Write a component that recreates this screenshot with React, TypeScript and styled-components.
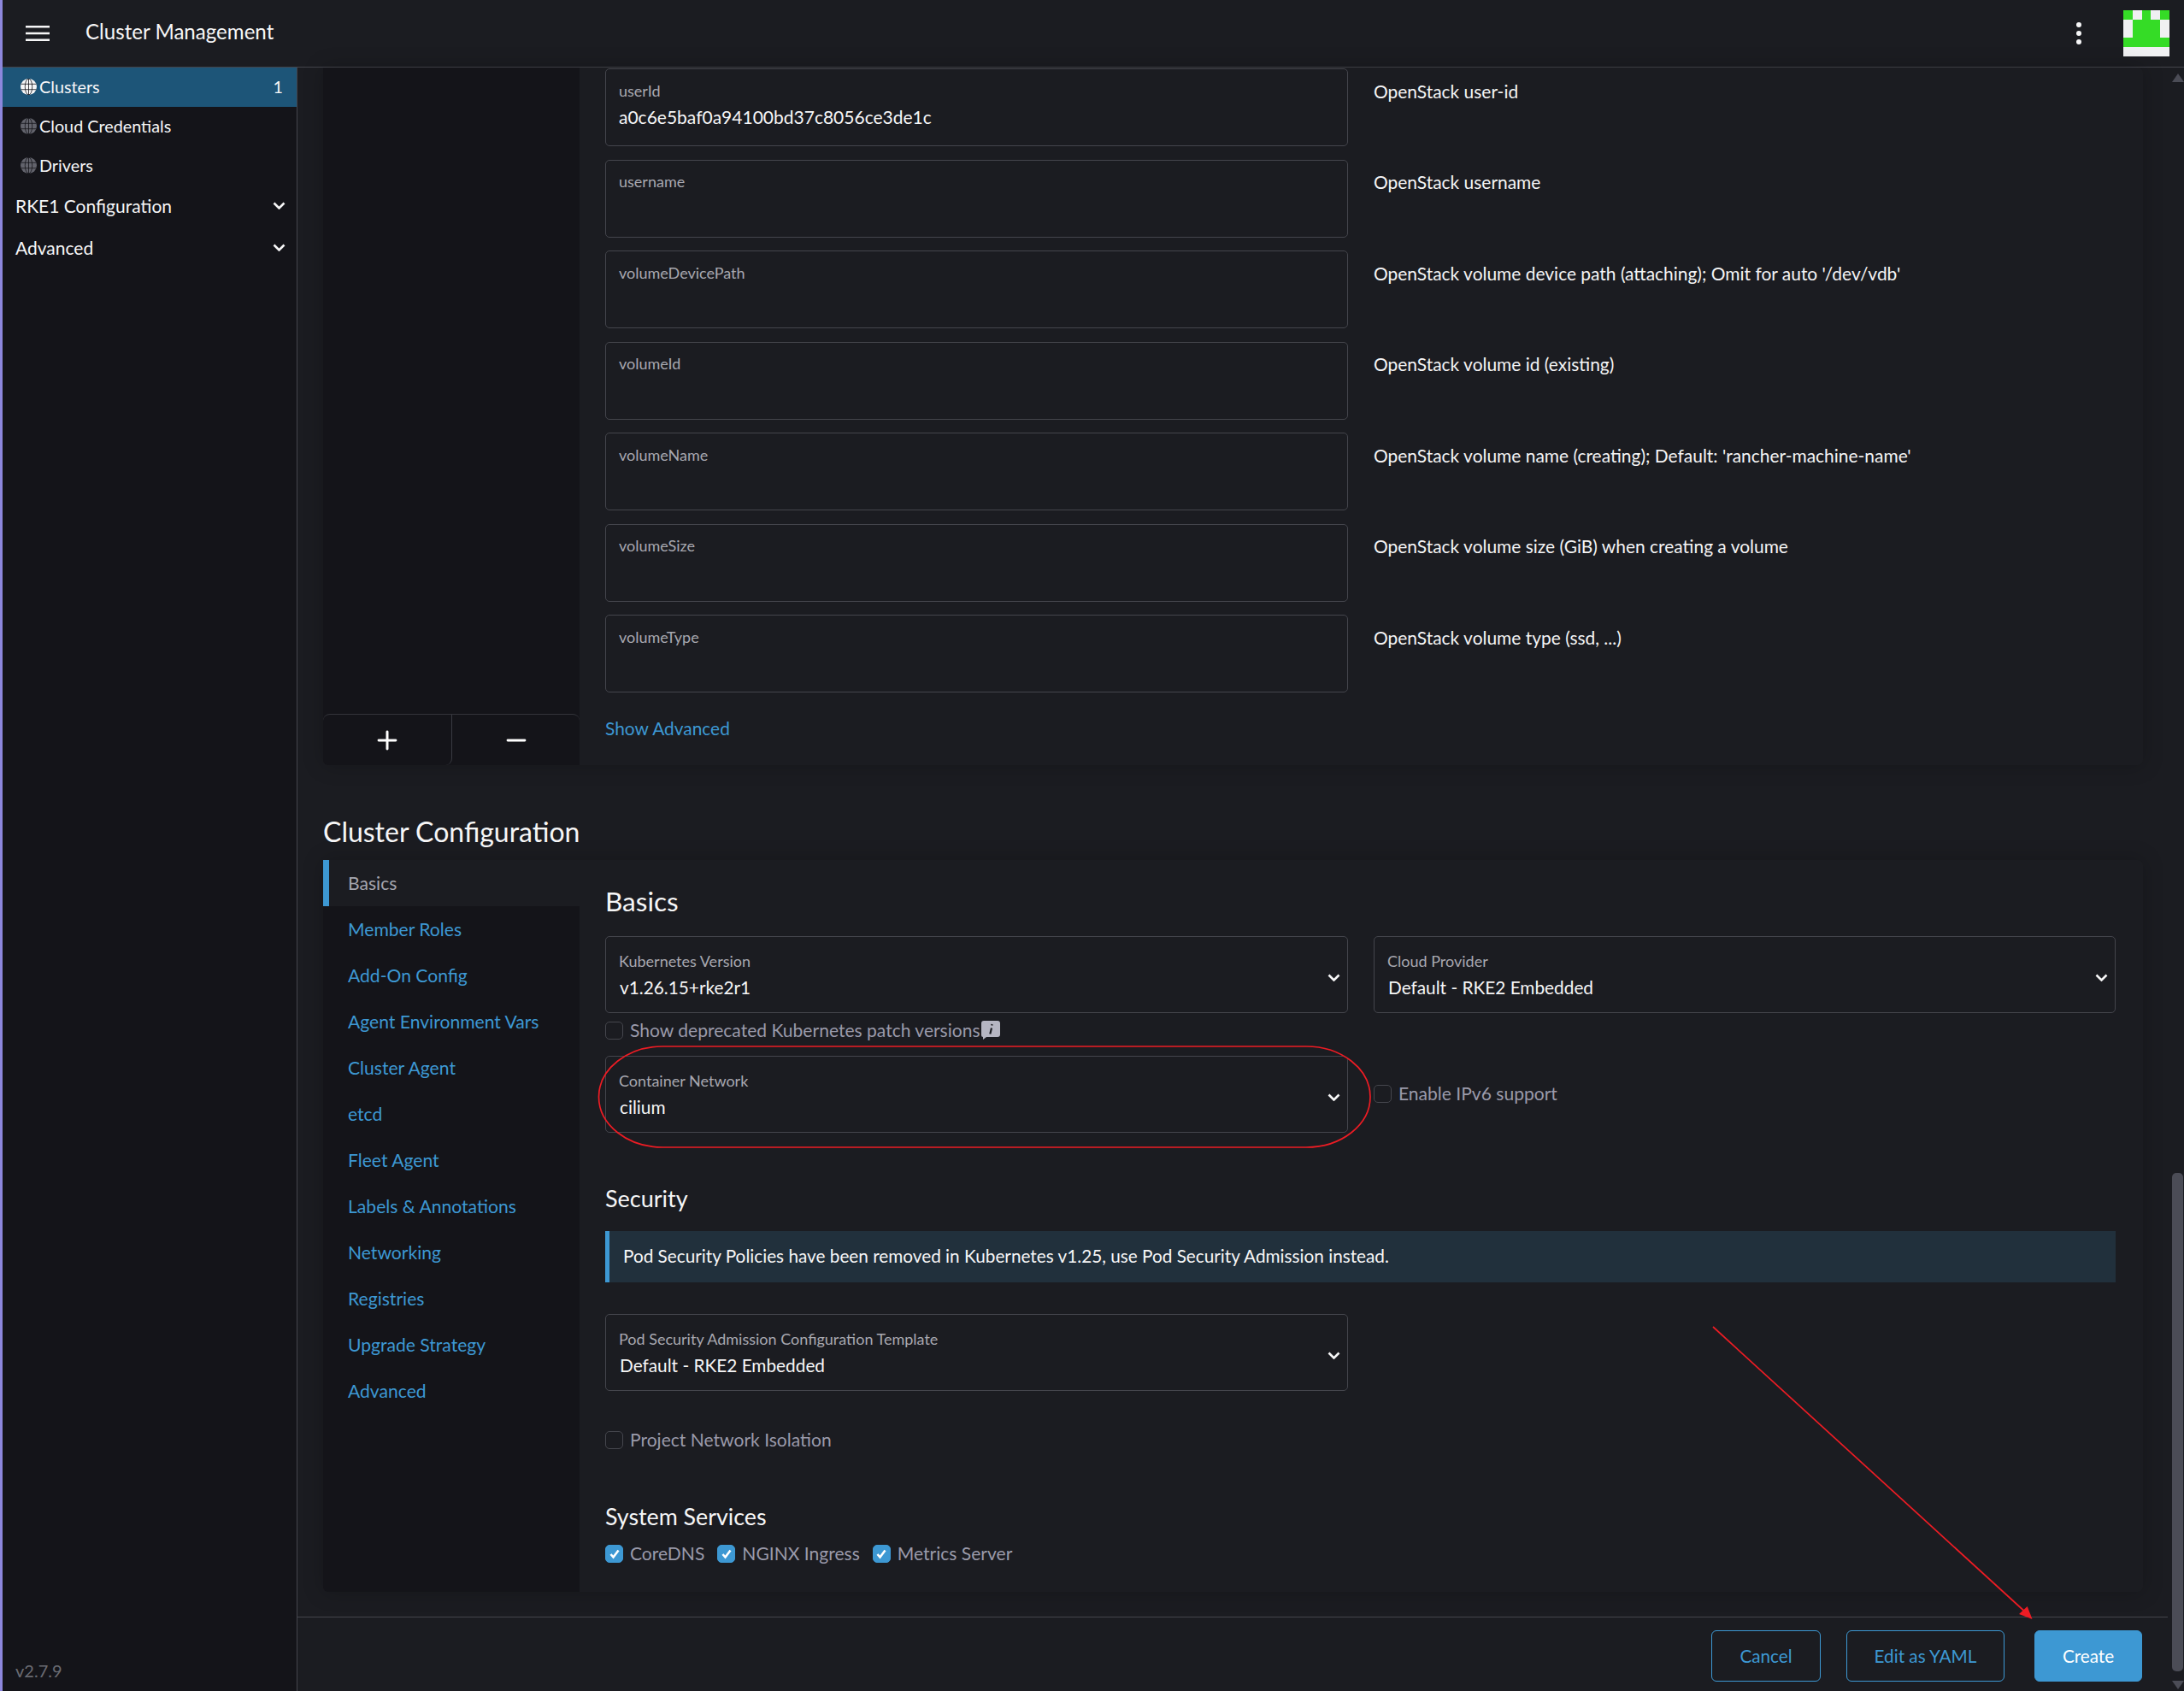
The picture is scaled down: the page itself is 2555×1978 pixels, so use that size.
import React from "react";
import styled, { createGlobalStyle } from "styled-components";
import { Plus, Minus } from "lucide-react";

const GlobalStyle = createGlobalStyle`
  * { box-sizing: border-box; }
  html, body { margin: 0; padding: 0; background: #1b1c21; }
  body { font-family: Lato, "Liberation Sans", sans-serif; font-size: 21px; color: #f4f4f5; overflow: hidden; }
`;

const BLUE = "#3d98d3";
const LINE = "#44454c";
const DARK = "#141419";
const BG = "#1b1c21";

const Page = styled.div`
  position: relative;
  width: 2555px;
  height: 1978px;
  display: flex;
  flex-direction: column;
  border-left: 3px solid #8d87dc;
  overflow: hidden;
`;
const Header = styled.header`
  flex: 0 0 79px;
  display: flex;
  align-items: center;
  padding: 0 17px 1px 27px;
  border-bottom: 1px solid ${LINE};
`;
const Title = styled.div`
  margin: 0 0 3px 42px;
  font-size: 24.1px;
  line-height: 30px;
  color: #f6f6f7;
  flex: 1;
`;
const Kebab = styled.svg`
  width: 8px;
  height: 30px;
  margin-right: 48.5px;
`;
const Avatar = styled.svg`
  width: 54px;
  height: 54px;
  display: block;
`;
const Body = styled.div`
  flex: 1;
  min-height: 0;
  display: flex;
`;
const Sidebar = styled.nav`
  flex: 0 0 345px;
  display: flex;
  flex-direction: column;
  background: ${DARK};
  border-right: 1px solid ${LINE};
`;
const NavItem = styled.div<{ $active?: boolean }>`
  height: 46px;
  display: flex;
  align-items: center;
  padding: 0 16px 2px 21px;
  font-size: 19.8px;
  color: #f6f6f7;
  background: ${(p) => (p.$active ? "#1d5578" : "transparent")};
`;
const GlobeIcon = styled.svg`
  width: 19px;
  height: 19px;
  margin-right: 3px;
  flex: none;
`;
const NavCount = styled.span`
  margin-left: auto;
`;
const NavGroup = styled.div`
  height: 48.5px;
  display: flex;
  align-items: center;
  justify-content: space-between;
  padding: 0 13px 1.5px 15px;
  font-size: 21px;
  color: #f6f6f7;
`;
const Version = styled.div`
  margin-top: auto;
  padding: 0 0 12px 15px;
  font-size: 20px;
  line-height: 24px;
  color: #6b6c73;
`;
const Chevron = styled.svg`
  width: 15px;
  height: 9px;
  flex: none;
`;
const Main = styled.main`
  flex: 1;
  min-width: 0;
  display: flex;
`;
const Column = styled.div`
  flex: 1;
  min-width: 0;
  display: flex;
  flex-direction: column;
`;
const Content = styled.div`
  flex: 1;
  min-height: 0;
  padding: 0 29px 0 30px;
`;
const Panel = styled.section`
  display: grid;
  grid-template-columns: 300px 1fr;
  background: ${BG};
  border-radius: 6px;
  box-shadow: 0 0 24px rgba(0, 0, 0, 0.22);
`;
const SideColumn = styled.div`
  background: ${DARK};
  display: flex;
  flex-direction: column;
  border-radius: 0 0 0 6px;
`;
const AddRemove = styled.div`
  margin-top: auto;
  height: 60px;
  display: grid;
  grid-template-columns: 151px 1fr;
  border-top: 1px solid #33343a;
  border-radius: 8px 8px 0 0;
  color: #fff;
`;
const AddRemoveButton = styled.div<{ $divider?: boolean }>`
  display: flex;
  align-items: center;
  justify-content: center;
  ${(p) => p.$divider && `border-right: 1px solid #3a3b42; border-radius: 0 0 8px 0;`}
`;
const PanelBody = styled.div`
  padding: 1px 32px 0 30px;
`;
const FieldGrid = styled.div`
  display: grid;
  grid-template-columns: 869px 868px;
  column-gap: 30px;
  row-gap: 15.5px;
`;
const Field = styled.div`
  height: 91px;
  padding: 12.5px 15px 0;
  border: 1px solid ${LINE};
  border-radius: 5px;
`;
const FieldLabel = styled.div`
  font-size: 18px;
  line-height: 24px;
  color: #a8a8b0;
`;
const FieldValue = styled.div`
  margin-top: 5px;
  font-size: 21px;
  line-height: 28px;
  color: #f6f6f7;
`;
const Description = styled.div`
  padding-top: 11.5px;
  font-size: 20.95px;
  line-height: 30px;
  color: #f4f4f5;
`;
const LinkText = styled.div`
  margin-top: 28px;
  padding-bottom: 29px;
  font-size: 20.9px;
  line-height: 28px;
  color: ${BLUE};
`;
const SectionHeading = styled.h2`
  margin: 0;
  height: 111px;
  padding-top: 43.5px;
  font-size: 32px;
  font-weight: 400;
  line-height: 67px;
  color: #f6f6f7;
`;
const Tab = styled.div<{ $active?: boolean }>`
  height: 54px;
  display: flex;
  align-items: center;
  padding-bottom: 1px;
  padding-left: ${(p) => (p.$active ? "22px" : "29px")};
  font-size: 21.1px;
  color: ${(p) => (p.$active ? "#a5a5ae" : BLUE)};
  background: ${(p) => (p.$active ? BG : "transparent")};
  border-left: ${(p) => (p.$active ? `7px solid ${BLUE}` : "none")};
`;
const ConfigBody = styled.div`
  padding: 28.5px 32px 33px 30px;
`;
const BasicsTitle = styled.h3`
  margin: 0 0 22.5px;
  font-size: 31.5px;
  font-weight: 400;
  line-height: 38px;
  color: #f6f6f7;
`;
const Pair = styled.div`
  display: grid;
  grid-template-columns: 869px 868px;
  column-gap: 30px;
`;
const Select = styled.div`
  height: 90px;
  padding: 14.5px 8.5px 0 15px;
  display: flex;
  align-items: center;
  justify-content: space-between;
  border: 1px solid ${LINE};
  border-radius: 5px;
`;
const SelectText = styled.div`
  align-self: flex-start;
`;
const SelectLabel = styled.div`
  font-size: 18px;
  line-height: 26px;
  color: #a8a8b0;
`;
const SelectValue = styled.div`
  margin-top: 4px;
  padding-left: 1px;
  font-size: 20.8px;
  line-height: 28px;
  color: #f6f6f7;
`;
const SelectChevron = styled(Chevron)`
  margin-top: -7.5px;
`;
const CheckRow = styled.div<{ $top?: number }>`
  display: flex;
  align-items: center;
  margin-top: ${(p) => p.$top ?? 0}px;
`;
const CheckBox = styled.span<{ $on?: boolean }>`
  width: 21px;
  height: 21px;
  flex: none;
  display: flex;
  align-items: center;
  justify-content: center;
  border-radius: 5px;
  border: 1px solid ${(p) => (p.$on ? BLUE : "#45464d")};
  background: ${(p) => (p.$on ? BLUE : "transparent")};
`;
const CheckLabel = styled.span`
  margin: 0 0 2px 8px;
  font-size: 21.05px;
  line-height: 21px;
  color: #9a9aaa;
`;
const CheckGroup = styled.span<{ $gap?: number }>`
  display: flex;
  align-items: center;
  margin-right: ${(p) => p.$gap ?? 0}px;
`;
const InfoIcon = styled.svg`
  width: 22px;
  height: 22px;
  margin-left: 1px;
  margin-bottom: 1px;
`;
const NetworkPair = styled(Pair)`
  margin-top: 18px;
  align-items: center;
`;
const SecurityTitle = styled.h4`
  margin: 58.5px 0 20.5px;
  font-size: 27px;
  font-weight: 400;
  line-height: 36px;
  color: #f6f6f7;
`;
const Banner = styled.div`
  height: 60px;
  display: flex;
  align-items: center;
  padding: 0 0 2px 16px;
  background: #21303c;
  border-left: 5px solid ${BLUE};
  font-size: 20.75px;
  color: #f6f6f7;
`;
const TemplatePair = styled(Pair)`
  margin-top: 37px;
`;
const ServicesTitle = styled.h4`
  margin: 63px 0 17px;
  font-size: 26.8px;
  font-weight: 400;
  line-height: 30px;
  color: #f6f6f7;
`;
const Footer = styled.footer`
  flex: none;
  display: flex;
  justify-content: flex-end;
  gap: 30px;
  padding: 15px 30px 11px;
  border-top: 1px solid ${LINE};
`;
const Button = styled.div<{ $primary?: boolean; $w: number }>`
  width: ${(p) => p.$w}px;
  height: 60px;
  display: flex;
  align-items: center;
  justify-content: center;
  border-radius: 6px;
  font-size: 20.7px;
  border: 1.5px solid ${BLUE};
  background: ${(p) => (p.$primary ? BLUE : "transparent")};
  color: ${(p) => (p.$primary ? "#fff" : BLUE)};
  margin-left: ${(p) => (p.$primary ? "5px" : "0")};
`;
const Scrollbar = styled.div`
  flex: 0 0 19px;
  display: flex;
  flex-direction: column;
  align-items: center;
  padding: 7px 0 2px 4px;
`;
const ArrowUp = styled.div`
  width: 0;
  height: 0;
  border-left: 7px solid transparent;
  border-right: 7px solid transparent;
  border-bottom: 10px solid #4b4c56;
`;
const ArrowDown = styled.div`
  width: 0;
  height: 0;
  margin-top: 11px;
  border-left: 7px solid transparent;
  border-right: 7px solid transparent;
  border-top: 10px solid #4b4c56;
`;
const Thumb = styled.div`
  width: 13px;
  height: 583px;
  margin-top: auto;
  border-radius: 5px;
  background: #4b4c56;
`;
const Annotations = styled.svg`
  position: absolute;
  left: -3px;
  top: 0;
  width: 2555px;
  height: 1978px;
  pointer-events: none;
`;

const Globe = ({ color }: { color: string }) => (
  <GlobeIcon viewBox="0 0 19 19">
    <circle cx="9.5" cy="9.5" r="9.5" fill={color} />
    <g fill="none" stroke={DARK} strokeWidth="0.8">
      <ellipse cx="9.5" cy="9.5" rx="4.2" ry="9.5" />
      <path d="M9.5 0v19M0.5 6.3h18M0.5 12.7h18" />
    </g>
  </GlobeIcon>
);
const Down = () => (
  <Chevron viewBox="0 0 15 9">
    <path d="M1.5 1.5 7.5 7.5 13.5 1.5" fill="none" stroke="#f6f6f7" strokeWidth="2.6" />
  </Chevron>
);
const SelectDown = () => (
  <SelectChevron viewBox="0 0 15 9">
    <path d="M1.5 1.5 7.5 7.5 13.5 1.5" fill="none" stroke="#f6f6f7" strokeWidth="2.6" />
  </SelectChevron>
);
const Check = ({ on, label, gap }: { on?: boolean; label: string; gap?: number }) => (
  <CheckGroup $gap={gap}>
    <CheckBox $on={on}>
      {on && (
        <svg width="14" height="13" viewBox="0 0 14 13">
          <path d="M2.5 7 5.5 10.5 11.5 2.5" fill="none" stroke="#fff" strokeWidth="2.6" />
        </svg>
      )}
    </CheckBox>
    <CheckLabel>{label}</CheckLabel>
  </CheckGroup>
);

const SelectBox = ({ label, value }: { label: string; value: string }) => (
  <Select>
    <SelectText>
      <SelectLabel>{label}</SelectLabel>
      <SelectValue>{value}</SelectValue>
    </SelectText>
    <SelectDown />
  </Select>
);

const fields = [
  ["userId", "a0c6e5baf0a94100bd37c8056ce3de1c", "OpenStack user-id"],
  ["username", "", "OpenStack username"],
  ["volumeDevicePath", "", "OpenStack volume device path (attaching); Omit for auto '/dev/vdb'"],
  ["volumeId", "", "OpenStack volume id (existing)"],
  ["volumeName", "", "OpenStack volume name (creating); Default: 'rancher-machine-name'"],
  ["volumeSize", "", "OpenStack volume size (GiB) when creating a volume"],
  ["volumeType", "", "OpenStack volume type (ssd, ...)"],
];
const tabs = [
  "Basics",
  "Member Roles",
  "Add-On Config",
  "Agent Environment Vars",
  "Cluster Agent",
  "etcd",
  "Fleet Agent",
  "Labels & Annotations",
  "Networking",
  "Registries",
  "Upgrade Strategy",
  "Advanced",
];
const G = "#35dc26";
const W = "#f0f0f2";
const avatar = [
  [G, W, G, W, G],
  [W, G, G, G, W],
  [W, G, G, G, W],
  [G, G, G, G, G],
  [W, W, W, W, W],
];

export default function App() {
  return (
    <>
      <GlobalStyle />
      <Page>
        <Header>
          <svg width="28" height="18" viewBox="0 0 28 18">
            <path d="M0 0h28v2.6H0zM0 7.7h28v2.6H0zM0 15.4h28V18H0z" fill="#f6f6f7" />
          </svg>
          <Title>Cluster Management</Title>
          <Kebab viewBox="0 0 8 30">
            <circle cx="4" cy="5" r="3" fill="#f6f6f7" />
            <circle cx="4" cy="15" r="3" fill="#f6f6f7" />
            <circle cx="4" cy="25" r="3" fill="#f6f6f7" />
          </Kebab>
          <Avatar viewBox="0 0 5 5" shapeRendering="crispEdges">
            {avatar.flatMap((row, y) =>
              row.map((c, x) => <rect key={`${x}-${y}`} x={x} y={y} width="1" height="1" fill={c} />)
            )}
          </Avatar>
        </Header>
        <Body>
          <Sidebar>
            <NavItem $active>
              <Globe color="#f6f6f7" />
              Clusters
              <NavCount>1</NavCount>
            </NavItem>
            <NavItem>
              <Globe color="#62636c" />
              Cloud Credentials
            </NavItem>
            <NavItem>
              <Globe color="#62636c" />
              Drivers
            </NavItem>
            <NavGroup>
              RKE1 Configuration
              <Down />
            </NavGroup>
            <NavGroup>
              Advanced
              <Down />
            </NavGroup>
            <Version>v2.7.9</Version>
          </Sidebar>
          <Main>
            <Column>
              <Content>
                <Panel>
                  <SideColumn>
                    <AddRemove>
                      <AddRemoveButton $divider>
                        <Plus size={34} strokeWidth={2.1} />
                      </AddRemoveButton>
                      <AddRemoveButton>
                        <Minus size={34} strokeWidth={2.1} />
                      </AddRemoveButton>
                    </AddRemove>
                  </SideColumn>
                  <PanelBody>
                    <FieldGrid>
                      {fields.map(([label, value, desc]) => (
                        <React.Fragment key={label}>
                          <Field>
                            <FieldLabel>{label}</FieldLabel>
                            {value && <FieldValue>{value}</FieldValue>}
                          </Field>
                          <Description>{desc}</Description>
                        </React.Fragment>
                      ))}
                    </FieldGrid>
                    <LinkText>Show Advanced</LinkText>
                  </PanelBody>
                </Panel>
                <SectionHeading>Cluster Configuration</SectionHeading>
                <Panel>
                  <SideColumn>
                    {tabs.map((t, i) => (
                      <Tab key={t} $active={i === 0}>
                        {t}
                      </Tab>
                    ))}
                  </SideColumn>
                  <ConfigBody>
                    <BasicsTitle>Basics</BasicsTitle>
                    <Pair>
                      <SelectBox label="Kubernetes Version" value="v1.26.15+rke2r1" />
                      <SelectBox label="Cloud Provider" value="Default - RKE2 Embedded" />
                    </Pair>
                    <CheckRow $top={9}>
                      <Check label="Show deprecated Kubernetes patch versions" />
                      <InfoIcon viewBox="0 0 22 22">
                        <path d="M3 0h16a3 3 0 0 1 3 3v13a3 3 0 0 1-3 3H6L2 22v-3a2 2 0 0 1-2-2V3a3 3 0 0 1 3-3z" fill="#b6b6c2" />
                        <path d="M12 8.5 10.3 15.5M12.5 4 12.3 5.5" fill="none" stroke={BG} strokeWidth="2.2" />
                      </InfoIcon>
                    </CheckRow>
                    <NetworkPair>
                      <SelectBox label="Container Network" value="cilium" />
                      <CheckRow $top={-2}>
                        <Check label="Enable IPv6 support" />
                      </CheckRow>
                    </NetworkPair>
                    <SecurityTitle>Security</SecurityTitle>
                    <Banner>Pod Security Policies have been removed in Kubernetes v1.25, use Pod Security Admission instead.</Banner>
                    <TemplatePair>
                      <SelectBox label="Pod Security Admission Configuration Template" value="Default - RKE2 Embedded" />
                    </TemplatePair>
                    <CheckRow $top={46}>
                      <Check label="Project Network Isolation" />
                    </CheckRow>
                    <ServicesTitle>System Services</ServicesTitle>
                    <CheckRow>
                      <Check on gap={15} label="CoreDNS" />
                      <Check on gap={15} label="NGINX Ingress" />
                      <Check on label="Metrics Server" />
                    </CheckRow>
                  </ConfigBody>
                </Panel>
              </Content>
              <Footer>
                <Button $w={128}>Cancel</Button>
                <Button $w={185}>Edit as YAML</Button>
                <Button $w={126} $primary>
                  Create
                </Button>
              </Footer>
            </Column>
            <Scrollbar>
              <ArrowUp />
              <Thumb />
              <ArrowDown />
            </Scrollbar>
          </Main>
        </Body>
        <Annotations viewBox="0 0 2555 1978">
          <rect x="700.5" y="1224" width="902.5" height="118" rx="75" ry="59" fill="none" stroke="#ed1c24" strokeWidth="1.7" />
          <path d="M2004 1552 2372 1888" fill="none" stroke="#ed1c24" strokeWidth="1.7" />
          <path d="M2377.5 1894 2371.7 1879 2362 1888z" fill="#ed1c24" />
        </Annotations>
      </Page>
    </>
  );
}
